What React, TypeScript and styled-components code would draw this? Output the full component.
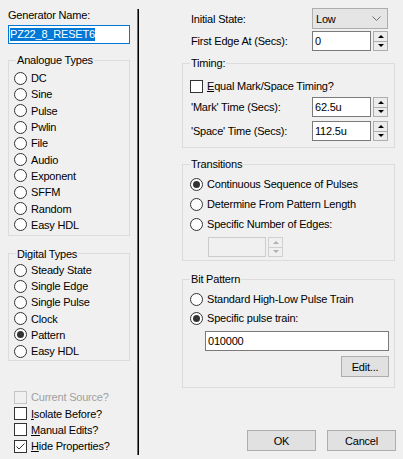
import React from 'react';
import styled, { createGlobalStyle } from 'styled-components';

const Global = createGlobalStyle`
  html, body { margin: 0; padding: 0; background: #f0f0f0; }
  body {
    font-family: "Liberation Sans", Arial, sans-serif;
    font-size: 11px;
    line-height: 14px;
    letter-spacing: -0.2px;
    color: #000;
  }
  #root { width: 403px; height: 459px; overflow: hidden; }
`;

const Dialog = styled.div`
  display: flex;
  width: 403px;
  height: 459px;
  background: #f0f0f0;
`;

const LeftPanel = styled.div`
  display: flex;
  flex-direction: column;
  width: 122px;
  margin-left: 8px;
  padding-top: 8px;
`;

const Divider = styled.div`
  width: 1px;
  height: 446px;
  margin-left: 7px;
  margin-top: 9px;
  border-left: 1px solid #6a6a6a;
  background: #000;
`;

const RightPanel = styled.div`
  display: flex;
  flex-direction: column;
  width: 213px;
  margin-left: 43px;
  padding-top: 8px;
`;

const Label = styled.span<{ $disabled?: boolean; $indent?: number }>`
  white-space: nowrap;
  color: ${(p) => (p.$disabled ? '#a0a0a0' : '#000')};
  margin-left: ${(p) => p.$indent ?? 0}px;
`;

const NameBox = styled.div`
  box-sizing: border-box;
  height: 19px;
  margin-top: 3px;
  border: 1px solid #0078d7;
  background: #fff;
  display: flex;
  align-items: center;
  padding-left: 1px;
`;

const Selected = styled.span`
  background: #0078d7;
  color: #fff;
  line-height: 13px;
  white-space: nowrap;
`;

const Group = styled.fieldset<{ $mt: number }>`
  margin: ${(p) => p.$mt}px 0 0 0;
  padding: 0;
  min-width: 0;
  border: 1px solid #dcdcdc;
`;

const Legend = styled.legend`
  margin-left: 7px;
  padding: 0 1px;
  line-height: 14px;
`;

const GroupBody = styled.div<{ $pad: string }>`
  display: flex;
  flex-direction: column;
  padding: ${(p) => p.$pad};
`;

const OptionRow = styled.div<{ $h: number; $mt?: number }>`
  display: flex;
  align-items: center;
  gap: 4px;
  height: ${(p) => p.$h}px;
  margin-top: ${(p) => p.$mt ?? 0}px;
  white-space: nowrap;
`;

const RadioCircle = styled.span<{ $checked?: boolean }>`
  box-sizing: border-box;
  flex: none;
  width: 13px;
  height: 13px;
  border: 1px solid #333;
  border-radius: 50%;
  background: #fff;
  display: flex;
  align-items: center;
  justify-content: center;
  &::after {
    content: '';
    display: ${(p) => (p.$checked ? 'block' : 'none')};
    width: 7px;
    height: 7px;
    border-radius: 50%;
    background: #333;
  }
`;

const CheckBoxBox = styled.span<{ $disabled?: boolean }>`
  box-sizing: border-box;
  flex: none;
  width: 13px;
  height: 13px;
  border: 1px solid ${(p) => (p.$disabled ? '#c4c4c4' : '#333')};
  background: ${(p) => (p.$disabled ? '#f0f0f0' : '#fff')};
  display: flex;
  align-items: center;
  justify-content: center;
`;

const CheckList = styled.div`
  display: flex;
  flex-direction: column;
  margin-top: 28px;
  padding-left: 6px;
`;

const FieldRow = styled.div<{ $h: number; $mt?: number; $pl?: number; $pr?: number }>`
  display: flex;
  align-items: center;
  justify-content: space-between;
  height: ${(p) => p.$h}px;
  margin-top: ${(p) => p.$mt ?? 0}px;
  padding-left: ${(p) => p.$pl ?? 0}px;
  padding-right: ${(p) => p.$pr ?? 0}px;
`;

const Select = styled.div`
  box-sizing: border-box;
  width: 76px;
  height: 21px;
  border: 1px solid #adadad;
  background: #e5e5e5;
  display: flex;
  align-items: center;
  justify-content: space-between;
  padding: 0 6px 0 3px;
`;

const SpinWrap = styled.div<{ $ml?: number; $mt?: number }>`
  display: flex;
  gap: 2px;
  height: 20px;
  margin-left: ${(p) => p.$ml ?? 0}px;
  margin-top: ${(p) => p.$mt ?? 0}px;
`;

const TextBox = styled.div<{ $w?: number; $disabled?: boolean }>`
  box-sizing: border-box;
  width: ${(p) => (p.$w ? `${p.$w}px` : 'auto')};
  height: 20px;
  border: 1px solid ${(p) => (p.$disabled ? '#cccccc' : '#7a7a7a')};
  background: ${(p) => (p.$disabled ? '#f0f0f0' : '#fff')};
  display: flex;
  align-items: center;
  padding-left: 2px;
  white-space: nowrap;
`;

const PatternBox = styled(TextBox)`
  margin-left: 15px;
  margin-top: 5px;
`;

const SpinButtons = styled.div<{ $disabled?: boolean }>`
  box-sizing: border-box;
  width: 15px;
  height: 20px;
  border: 1px solid ${(p) => (p.$disabled ? '#d0d0d0' : '#adadad')};
  background: ${(p) => (p.$disabled ? '#f0f0f0' : '#ececec')};
  display: flex;
  flex-direction: column;
`;

const SpinHalf = styled.div<{ $top?: boolean; $disabled?: boolean }>`
  flex: 1;
  display: flex;
  align-items: center;
  justify-content: center;
  border-bottom: ${(p) => (p.$top ? `1px solid ${p.$disabled ? '#d0d0d0' : '#adadad'}` : 'none')};
`;

const Arrow = styled.span<{ $up?: boolean; $disabled?: boolean }>`
  width: 0;
  height: 0;
  border-left: 3px solid transparent;
  border-right: 3px solid transparent;
  ${(p) =>
    p.$up
      ? `border-bottom: 3px solid ${p.$disabled ? '#b0b0b0' : '#000'};`
      : `border-top: 3px solid ${p.$disabled ? '#b0b0b0' : '#000'};`}
`;

const ButtonRow = styled.div<{ $mt: number; $gap: number; $mr?: number }>`
  display: flex;
  justify-content: flex-end;
  gap: ${(p) => p.$gap}px;
  margin-top: ${(p) => p.$mt}px;
  margin-right: ${(p) => p.$mr ?? 0}px;
`;

const Button = styled.button<{ $w: number }>`
  box-sizing: border-box;
  width: ${(p) => p.$w}px;
  height: 21px;
  padding: 0;
  border: 1px solid #adadad;
  background: #e1e1e1;
  color: #000;
  font-family: "Liberation Sans", Arial, sans-serif;
  font-size: 11px;
  letter-spacing: -0.2px;
`;

const Radio = ({ label, checked, h }: { label: string; checked?: boolean; h: number }) => (
  <OptionRow $h={h}>
    <RadioCircle $checked={checked} />
    <Label>{label}</Label>
  </OptionRow>
);

const Check = ({
  children,
  checked,
  disabled,
  h,
}: {
  children: React.ReactNode;
  checked?: boolean;
  disabled?: boolean;
  h: number;
}) => (
  <OptionRow $h={h}>
    <CheckBoxBox $disabled={disabled}>
      {checked && (
        <svg width="11" height="11" viewBox="0 0 11 11">
          <polyline points="1.5,5.5 4,8 9.5,2.5" fill="none" stroke="#333" strokeWidth="1" />
        </svg>
      )}
    </CheckBoxBox>
    <Label $disabled={disabled}>{children}</Label>
  </OptionRow>
);

const Spin = ({
  value,
  w,
  disabled,
  ml,
  mt,
}: {
  value: string;
  w: number;
  disabled?: boolean;
  ml?: number;
  mt?: number;
}) => (
  <SpinWrap $ml={ml} $mt={mt}>
    <TextBox $w={w} $disabled={disabled}>
      {value}
    </TextBox>
    <SpinButtons $disabled={disabled}>
      <SpinHalf $top $disabled={disabled}>
        <Arrow $up $disabled={disabled} />
      </SpinHalf>
      <SpinHalf>
        <Arrow $disabled={disabled} />
      </SpinHalf>
    </SpinButtons>
  </SpinWrap>
);

const analogue = ['DC', 'Sine', 'Pulse', 'Pwlin', 'File', 'Audio', 'Exponent', 'SFFM', 'Random', 'Easy HDL'];
const digital = ['Steady State', 'Single Edge', 'Single Pulse', 'Clock', 'Pattern', 'Easy HDL'];

export default function App() {
  return (
    <>
      <Global />
      <Dialog>
        <LeftPanel>
          <Label>Generator Name:</Label>
          <NameBox>
            <Selected>PZ22_8_RESET6</Selected>
          </NameBox>

          <Group $mt={9}>
            <Legend>Analogue Types</Legend>
            <GroupBody $pad="3px 0 2px 5px">
              {analogue.map((a) => (
                <Radio key={a} label={a} h={16.3} />
              ))}
            </GroupBody>
          </Group>

          <Group $mt={11}>
            <Legend>Digital Types</Legend>
            <GroupBody $pad="1px 0 1px 5px">
              {digital.map((d) => (
                <Radio key={d} label={d} h={16.2} checked={d === 'Pattern'} />
              ))}
            </GroupBody>
          </Group>

          <CheckList>
            <Check h={16.3} disabled>
              Current Source?
            </Check>
            <Check h={16.3}>
              <u>I</u>solate Before?
            </Check>
            <Check h={16.3}>
              <u>M</u>anual Edits?
            </Check>
            <Check h={16.3} checked>
              <u>H</u>ide Properties?
            </Check>
          </CheckList>
        </LeftPanel>

        <Divider />

        <RightPanel>
          <FieldRow $h={21} $pl={9} $pr={7}>
            <Label>Initial State:</Label>
            <Select>
              <span>Low</span>
              <svg width="9" height="5" viewBox="0 0 9 5">
                <polyline points="0.5,0.5 4.5,4.5 8.5,0.5" fill="none" stroke="#707070" strokeWidth="1" />
              </svg>
            </Select>
          </FieldRow>
          <FieldRow $h={20} $mt={2} $pl={9} $pr={7}>
            <Label>First Edge At (Secs):</Label>
            <Spin value="0" w={59} />
          </FieldRow>

          <Group $mt={5}>
            <Legend>Timing:</Legend>
            <GroupBody $pad="8px 6px 6px 7px">
              <Check h={16}>
                <u>E</u>qual Mark/Space Timing?
              </Check>
              <FieldRow $h={20} $mt={3}>
                <Label $indent={1}>'Mark' Time (Secs):</Label>
                <Spin value="62.5u" w={59} />
              </FieldRow>
              <FieldRow $h={20} $mt={4}>
                <Label $indent={1}>'Space' Time (Secs):</Label>
                <Spin value="112.5u" w={59} />
              </FieldRow>
            </GroupBody>
          </Group>

          <Group $mt={9}>
            <Legend>Transitions</Legend>
            <GroupBody $pad="5px 6px 3px 7px">
              <Radio h={16} label="Continuous Sequence of Pulses" checked />
              <OptionRow $h={16} $mt={4}>
                <RadioCircle />
                <Label>Determine From Pattern Length</Label>
              </OptionRow>
              <OptionRow $h={16} $mt={4}>
                <RadioCircle />
                <Label>Specific Number of Edges:</Label>
              </OptionRow>
              <Spin value="" w={58} disabled ml={18} mt={5} />
            </GroupBody>
          </Group>

          <Group $mt={11}>
            <Legend>Bit Pattern</Legend>
            <GroupBody $pad="5px 5px 10px 7px">
              <Radio h={16} label="Standard High-Low Pulse Train" />
              <OptionRow $h={16} $mt={3}>
                <RadioCircle $checked />
                <Label>Specific pulse train:</Label>
              </OptionRow>
              <PatternBox>010000</PatternBox>
              <ButtonRow $mt={5} $gap={0}>
                <Button $w={48}>Edit...</Button>
              </ButtonRow>
            </GroupBody>
          </Group>

          <ButtonRow $mt={42} $gap={11} $mr={-1}>
            <Button $w={69}>OK</Button>
            <Button $w={69}>Cancel</Button>
          </ButtonRow>
        </RightPanel>
      </Dialog>
    </>
  );
}
